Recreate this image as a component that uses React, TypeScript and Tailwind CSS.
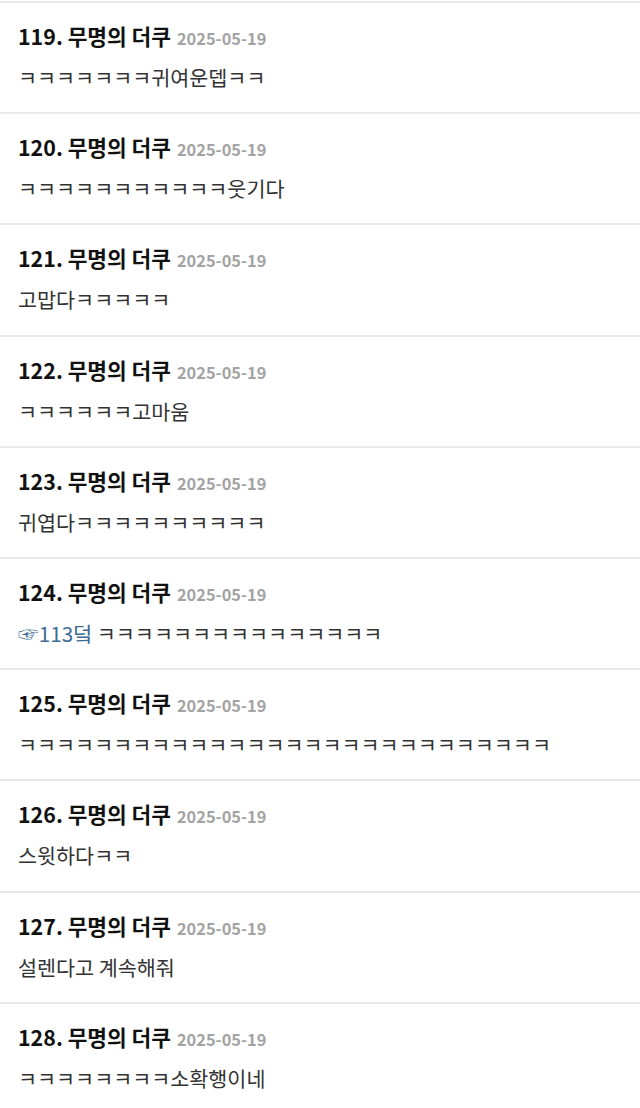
const comments: { no: number; body: React.ReactNode }[] = [
  { no: 119, body: "ㅋㅋㅋㅋㅋㅋㅋ귀여운뎁ㅋㅋ" },
  { no: 120, body: "ㅋㅋㅋㅋㅋㅋㅋㅋㅋㅋㅋ웃기다" },
  { no: 121, body: "고맙다ㅋㅋㅋㅋㅋ" },
  { no: 122, body: "ㅋㅋㅋㅋㅋㅋ고마움" },
  { no: 123, body: "귀엽다ㅋㅋㅋㅋㅋㅋㅋㅋㅋㅋ" },
  {
    no: 124,
    body: (
      <>
        <span className="text-[#3d6a93]">☞113덬</span> ㅋㅋㅋㅋㅋㅋㅋㅋㅋㅋㅋㅋㅋㅋㅋ
      </>
    ),
  },
  { no: 125, body: "ㅋㅋㅋㅋㅋㅋㅋㅋㅋㅋㅋㅋㅋㅋㅋㅋㅋㅋㅋㅋㅋㅋㅋㅋㅋㅋㅋㅋ" },
  { no: 126, body: "스윗하다ㅋㅋ" },
  { no: 127, body: "설렌다고 계속해줘" },
  { no: 128, body: "ㅋㅋㅋㅋㅋㅋㅋㅋ소확행이네" },
];

export default function App() {
  return (
    <div
      className="h-[1108px] overflow-hidden bg-white pt-px"
      style={{ fontFamily: '"Noto Sans CJK KR", "Noto Sans", sans-serif' }}
    >
      {comments.map((c) => (
        <div key={c.no} className="border-t-2 border-[#e9e9e9] px-[18px] pt-[19px] pb-[21.2px]">
          <div className="flex h-[28px] items-baseline gap-[6px] pt-[3px]">
            <span className="text-[21.4px] leading-[22px] font-bold text-[#111]">
              {c.no}. 무명의 더쿠
            </span>
            <span className="text-[16.4px] leading-[22px] font-bold text-[#a3a3a3]">2025-05-19</span>
          </div>
          <p className="mt-[13px] text-[20.7px] leading-[28px] text-[#333]">{c.body}</p>
        </div>
      ))}
    </div>
  );
}
